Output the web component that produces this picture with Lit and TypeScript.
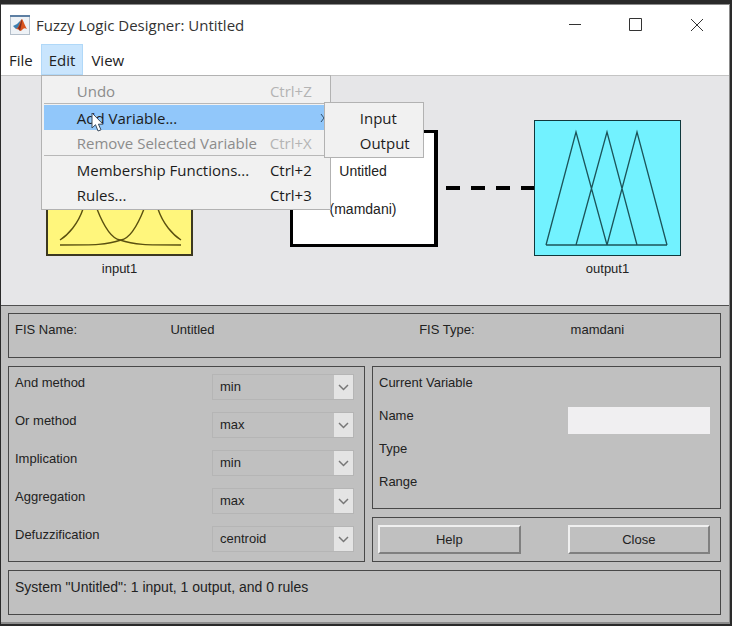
import { LitElement, html, css, nothing } from "lit";
import { customElement, state } from "lit/decorators.js";

interface MenuEntry {
  label: string;
  shortcut?: string;
  disabled?: boolean;
  children?: string[];
}

const EDIT_MENU: MenuEntry[][] = [
  [{ label: "Undo", shortcut: "Ctrl+Z", disabled: true }],
  [
    { label: "Add Variable...", children: ["Input", "Output"] },
    { label: "Remove Selected Variable", shortcut: "Ctrl+X", disabled: true },
  ],
  [
    { label: "Membership Functions...", shortcut: "Ctrl+2" },
    { label: "Rules...", shortcut: "Ctrl+3" },
  ],
];

const METHODS = [
  { id: "and", label: "And method", options: ["min", "prod"] },
  { id: "or", label: "Or method", options: ["max", "probor"] },
  { id: "imp", label: "Implication", options: ["min", "prod"] },
  { id: "agg", label: "Aggregation", options: ["max", "sum", "probor"] },
  { id: "defuzz", label: "Defuzzification", options: ["centroid", "bisector", "mom", "lom", "som"] },
];

@customElement("edit-menu")
export class EditMenu extends LitElement {
  static styles = css`
    :host {
      display: block;
      color: #1c1c1c;
      font: 15px/24px "Open Sans", "Noto Sans", sans-serif;
    }
    .menu {
      box-sizing: border-box;
      margin: 0;
      padding: 2px;
      list-style: none;
      background: #f1f1f1;
      border: 1px solid #b2b2b2;
    }
    .main { width: 290px; }
    .sub {
      position: absolute;
      top: -3px;
      left: 280px;
      width: 100px;
    }
    .entry { position: relative; }
    .item {
      box-sizing: border-box;
      display: flex;
      justify-content: space-between;
      align-items: center;
      width: 100%;
      height: 25px;
      padding: 0 16px 0 33px;
      border: 0;
      background: none;
      color: inherit;
      font: inherit;
      white-space: nowrap;
      text-align: left;
    }
    .open {
      padding-right: 2px;
      background: #91c7fa;
    }
    .item:disabled { color: #8c8c8c; }
    .item:disabled .key { color: #b4b4b4; }
    .rule {
      height: 1px;
      margin: 0 0 1px;
      background: #b8b8b8;
    }
    .chevron {
      width: 6px;
      height: 10px;
      fill: none;
      stroke: #33506b;
    }
  `;

  private entry(e: MenuEntry) {
    return html`<li class="entry" role="none">
      <button class="item ${e.children ? "open" : ""}" role="menuitem" ?disabled=${e.disabled}>
        <span>${e.label}</span>
        ${e.shortcut ? html`<span class="key">${e.shortcut}</span>` : nothing}
        ${e.children
          ? html`<svg class="chevron" viewBox="0 0 6 10"><path d="M1 1l3 4-3 4" /></svg>`
          : nothing}
      </button>
      ${e.children
        ? html`<ul class="menu sub" role="menu">
            ${e.children.map((label) => this.entry({ label }))}
          </ul>`
        : nothing}
    </li>`;
  }

  render() {
    return html`<ul class="menu main" role="menu">
      ${EDIT_MENU.map(
        (group, i) => html`
          ${i ? html`<li class="rule" role="separator"></li>` : nothing}
          ${group.map((e) => this.entry(e))}
        `
      )}
    </ul>`;
  }
}

@customElement("fis-diagram")
export class FisDiagram extends LitElement {
  static styles = css`
    :host {
      display: flex;
      align-items: flex-start;
      box-sizing: border-box;
      min-height: 230px;
      padding: 44px 48px 0 45px;
      background: #e6e6e8;
      border-bottom: 1px solid #505050;
      color: #222;
      font: 13px/18px "Liberation Sans", Arial, sans-serif;
    }
    .node {
      display: flex;
      flex-direction: column;
      align-items: center;
      gap: 4px;
      margin: 0;
    }
    .plot {
      box-sizing: border-box;
      width: 147px;
      height: 136px;
      overflow: visible;
      fill: none;
      stroke-width: 1;
    }
    .input { background: #fff67c; border: 2px solid #3c3820; }
    .input .curve { stroke: #5a5010; stroke-width: 1.4; }
    .output { background: #72f2ff; border: 1px solid #10383c; }
    .output .curve { stroke: #1c545a; stroke-width: 1.3; }
    .system {
      box-sizing: border-box;
      display: flex;
      flex-direction: column;
      align-items: center;
      gap: 20px;
      width: 148px;
      height: 117px;
      margin-top: 10px;
      padding-top: 29px;
      background: #fff;
      border: 3px solid #000;
      border-right-width: 4px;
      font-size: 14px;
    }
    .wire {
      flex: 1;
      height: 4px;
      margin-top: 66px;
      background: repeating-linear-gradient(to right, transparent 0 8px, #000 8px 22px, transparent 22px 25px);
    }
  `;

  render() {
    return html`
      <figure class="node">
        <svg class="plot input" viewBox="2 2 143 132">
          <path class="curve" d="M14 120C22 115 32 104 37 89C40 70 41 16 44 16C47 16 48 70 51 89C60 112 68 119 74 120C88 125 100 125 135 125" />
          <path class="curve" d="M135 120C127 115 117 104 112 89C109 70 108 16 105 16C102 16 101 70 98 89C89 112 81 119 75 120C61 125 49 125 14 125" />
        </svg>
        <figcaption>input1</figcaption>
      </figure>
      <div class="wire"></div>
      <div class="system"><span>Untitled</span><span>(mamdani)</span></div>
      <div class="wire"></div>
      <figure class="node">
        <svg class="plot output" viewBox="1 1 145 134">
          <path class="curve" d="M12 125L42 12L73 125M42 125L73 12L103 125M73 125L103 12L133 125M12 125H133" />
        </svg>
        <figcaption>output1</figcaption>
      </figure>
    `;
  }
}

@customElement("app-root")
export class AppRoot extends LitElement {
  @state() private menuOpen = true;

  static styles = css`
    :host {
      display: block;
      box-sizing: border-box;
      min-height: 100vh;
      padding: 4px 2px 2px 1px;
      background: #2a2a2a;
      color: #222;
      font: 13px/18px "Liberation Sans", Arial, sans-serif;
    }
    .window {
      background: #fff;
      border: solid #8c8c8c;
      border-width: 1px 1px 2px 0;
    }
    .titlebar {
      display: flex;
      align-items: center;
      height: 39px;
      padding: 0 2px 0 9px;
      gap: 6px;
      font: 15px/20px "Open Sans", "Noto Sans", sans-serif;
      color: #333;
    }
    .logo { width: 20px; height: 20px; }
    .title {
      flex: 1;
      margin: 0;
      font: inherit;
      white-space: nowrap;
    }
    .controls { display: flex; }
    .control {
      display: grid;
      place-items: center;
      width: 61px;
      height: 38px;
      padding: 0;
      border: 0;
      background: none;
    }
    .glyph {
      width: 14px;
      height: 14px;
      fill: none;
      stroke: #333;
    }
    .menubar {
      display: flex;
      height: 31px;
      border-bottom: 1px solid #c4c4c4;
    }
    .slot { position: relative; }
    .top {
      box-sizing: border-box;
      height: 31px;
      padding: 0 8px;
      border: 0;
      background: none;
      color: #222;
      font: 15px/30px "Open Sans", "Noto Sans", sans-serif;
    }
    .active {
      background: #c9e5fd;
      box-shadow: inset 0 0 0 1px #b0d8f8;
    }
    .popup {
      position: absolute;
      z-index: 2;
      top: 31px;
      left: 0;
    }
    .cursor {
      position: absolute;
      z-index: 3;
      top: 68px;
      left: 50px;
      width: 13px;
      height: 21px;
      pointer-events: none;
    }
    .panels {
      display: grid;
      gap: 8px;
      padding: 7px 8px 7px 7px;
      background: #c0c0c0;
    }
    .box {
      box-sizing: border-box;
      border: 1px solid #484848;
    }
    .strip {
      min-height: 45px;
      padding: 7px 6px;
    }
    .summary {
      display: grid;
      grid-template-columns: 155fr 248fr 151fr 143fr;
    }
    .columns {
      display: grid;
      grid-template-columns: 357fr 349fr;
      gap: 7px;
    }
    .side {
      display: flex;
      flex-direction: column;
      gap: 8px;
    }
    .methods {
      display: grid;
      gap: 12px;
      padding: 7px 10px 9px 6px;
    }
    .method {
      display: flex;
      justify-content: space-between;
      align-items: flex-start;
    }
    .picker {
      position: relative;
      width: 142px;
      height: 26px;
      box-sizing: border-box;
      border: 1px solid #b5b5b5;
      display: flex;
    }
    .choice {
      appearance: none;
      width: 100%;
      padding: 0 24px 0 7px;
      border: 0;
      border-radius: 0;
      background: none;
      color: inherit;
      font: inherit;
    }
    .arrow {
      position: absolute;
      inset: 0 0 0 auto;
      width: 19px;
      height: 24px;
      background: #e4e4e4;
      fill: none;
      stroke: #777;
      stroke-width: 1.5;
      pointer-events: none;
    }
    .variable {
      flex: 1;
      display: grid;
      grid-template-columns: 1fr 142px;
      grid-auto-rows: 33px;
      align-items: start;
      padding: 7px 10px 0 6px;
    }
    .heading {
      grid-column: 1 / -1;
      margin: 0;
      font: inherit;
    }
    .field {
      box-sizing: border-box;
      width: 100%;
      height: 27px;
      padding: 0 6px;
      border: 0;
      background: #f0eff1;
      font: inherit;
    }
    .actions {
      display: grid;
      grid-template-columns: 1fr 1fr;
      gap: 47px;
      min-height: 45px;
      padding: 7px 10px 7px 5px;
    }
    .action {
      padding: 0;
      border: solid;
      border-width: 2px;
      border-color: #f0f0f0 #808080 #808080 #f0f0f0;
      background: #c0c0c0;
      color: inherit;
      font: inherit;
    }
    .status {
      margin: 0;
      font-size: 14px;
    }
  `;

  private toggleMenu() {
    this.menuOpen = !this.menuOpen;
  }

  render() {
    return html`
      <main class="window">
        <header class="titlebar">
          <svg class="logo" viewBox="0 0 20 20">
            <rect x=".5" y=".5" width="19" height="19" fill="#eef2f6" stroke="#b4bfca" />
            <path d="M0 1h20" stroke="#5d7fa3" stroke-width="2" />
            <path d="M3 11l4-2 4-4-2 8-3 1z" fill="#3d7fb0" />
            <path d="M6 14c3-1 4-9 6-10 1 1 3 7 5 10-2-1-3-1-4 0-1 1-2 2-3 2 0-1-2-2-4-2z" fill="#d9541e" />
            <path d="M12 4c-1 2-2 7-4 9l2 3c1-4 2-8 2-12z" fill="#7c2a1c" />
          </svg>
          <h1 class="title">Fuzzy Logic Designer: Untitled</h1>
          <div class="controls">
            <button class="control" aria-label="Minimize">
              <svg class="glyph" viewBox="0 0 14 14"><path d="M1 6.5h12" /></svg>
            </button>
            <button class="control" aria-label="Maximize">
              <svg class="glyph" viewBox="0 0 14 14"><path d="M.5.5h12v12H.5z" /></svg>
            </button>
            <button class="control" aria-label="Close window">
              <svg class="glyph" viewBox="0 0 14 14"><path d="M1 1l12 12M13 1L1 13" /></svg>
            </button>
          </div>
        </header>
        <nav class="menubar">
          <button class="top">File</button>
          <div class="slot">
            <button class="top ${this.menuOpen ? "active" : ""}" @click=${this.toggleMenu}>Edit</button>
            ${this.menuOpen ? html`<edit-menu class="popup"></edit-menu>` : nothing}
            <svg class="cursor" viewBox="0 0 13 21">
              <path d="M1 1v15l3.500-3.300L7 19l3-1.200-2.600-5.600H12z" fill="#fff" stroke="#3a4a5c" />
            </svg>
          </div>
          <button class="top">View</button>
        </nav>
        <fis-diagram></fis-diagram>
        <section class="panels">
          <div class="box strip summary">
            <span>FIS Name:</span><span>Untitled</span><span>FIS Type:</span><span>mamdani</span>
          </div>
          <div class="columns">
            <div class="box methods">
              ${METHODS.map(
                (m) => html`<div class="method">
                  <label for=${m.id}>${m.label}</label>
                  <div class="picker">
                    <select class="choice" id=${m.id}>
                      ${m.options.map((o) => html`<option>${o}</option>`)}
                    </select>
                    <svg class="arrow" viewBox="0 0 19 24"><path d="M5 10l4.500 4.500L14 10" /></svg>
                  </div>
                </div>`
              )}
            </div>
            <div class="side">
              <div class="box variable">
                <h2 class="heading">Current Variable</h2>
                <label for="name">Name</label><input class="field" id="name" type="text" />
                <span>Type</span><span></span>
                <span>Range</span><span></span>
              </div>
              <div class="box actions">
                <button class="action">Help</button>
                <button class="action">Close</button>
              </div>
            </div>
          </div>
          <div class="box strip">
            <p class="status">System "Untitled": 1 input, 1 output, and 0 rules</p>
          </div>
        </section>
      </main>
    `;
  }
}
